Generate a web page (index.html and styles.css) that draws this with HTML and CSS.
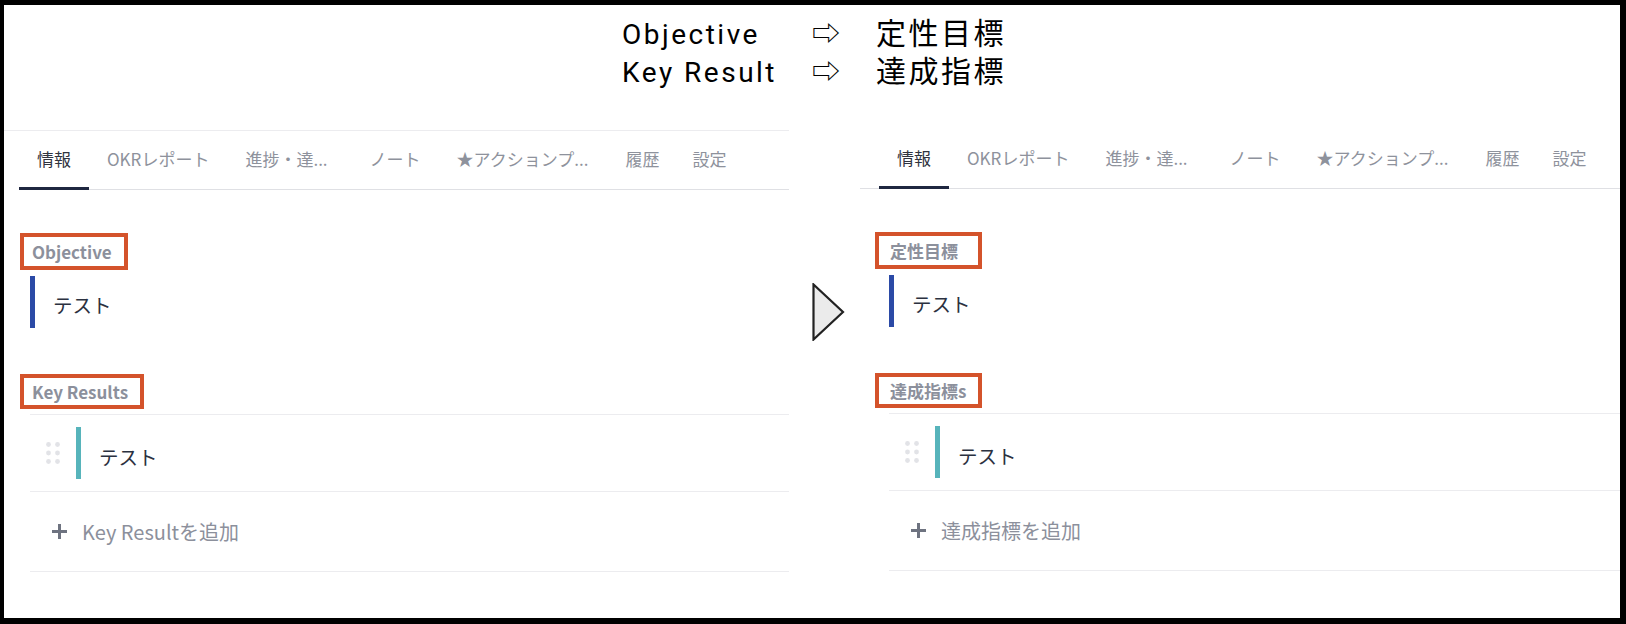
FILE: index.html
```html
<!DOCTYPE html>
<html lang="ja">
<head>
    <meta charset="UTF-8">
    <meta name="viewport" content="width=device-width, initial-scale=1.0">
    <title>OKR 用語の変更</title>
    <link rel="stylesheet" href="styles.css">
</head>
<body>
<div class="frame">
    <header class="legend">
        <div class="legend-grid">
            <span class="term">Objective</span><span class="arrow">⇨</span><span class="ja">定性目標</span>
            <span class="term">Key Result</span><span class="arrow">⇨</span><span class="ja">達成指標</span>
        </div>
    </header>

    <main class="compare">
        <!-- 変更前 -->
        <section class="panel panel-before">
            <nav class="tabs">
                <span class="tab active">情報</span>
                <span class="tab">OKRレポート</span>
                <span class="tab trunc">進捗・達...</span>
                <span class="tab">ノート</span>
                <span class="tab trunc-last">★アクションプ...</span>
                <span class="tab short">履歴</span>
                <span class="tab">設定</span>
            </nav>
            <div class="info">
                <div class="field">
                    <span class="field-label">Objective</span>
                    <div class="objective-item">テスト</div>
                </div>
                <div class="field field-kr">
                    <span class="field-label">Key Results</span>
                    <div class="kr-list">
                        <div class="kr-row">
                            <svg class="drag" width="15" height="22" viewBox="0 0 15 22">
                                <circle cx="2.5" cy="2.5" r="2.4"/><circle cx="11.5" cy="2.5" r="2.4"/>
                                <circle cx="2.5" cy="11" r="2.4"/><circle cx="11.5" cy="11" r="2.4"/>
                                <circle cx="2.5" cy="19.5" r="2.4"/><circle cx="11.5" cy="19.5" r="2.4"/>
                            </svg>
                            <span class="kr-bar"></span>
                            <span class="kr-text">テスト</span>
                        </div>
                        <div class="add-row">
                            <svg class="plus" width="17" height="17" viewBox="0 0 17 17"><path d="M8.5 1v15M1 8.5h15"/></svg>
                            <span>Key Resultを追加</span>
                        </div>
                    </div>
                </div>
            </div>
        </section>

        <div class="pointer">
            <svg width="33" height="58" viewBox="0 0 33 58"><polygon points="1.5,1.5 1.5,56.5 31,29"/></svg>
        </div>

        <!-- 変更後 -->
        <section class="panel panel-after">
            <nav class="tabs">
                <span class="tab active">情報</span>
                <span class="tab">OKRレポート</span>
                <span class="tab trunc">進捗・達...</span>
                <span class="tab">ノート</span>
                <span class="tab trunc-last">★アクションプ...</span>
                <span class="tab short">履歴</span>
                <span class="tab">設定</span>
            </nav>
            <div class="info">
                <div class="field">
                    <span class="field-label">定性目標</span>
                    <div class="objective-item">テスト</div>
                </div>
                <div class="field field-kr">
                    <span class="field-label">達成指標s</span>
                    <div class="kr-list">
                        <div class="kr-row">
                            <svg class="drag" width="15" height="22" viewBox="0 0 15 22">
                                <circle cx="2.5" cy="2.5" r="2.4"/><circle cx="11.5" cy="2.5" r="2.4"/>
                                <circle cx="2.5" cy="11" r="2.4"/><circle cx="11.5" cy="11" r="2.4"/>
                                <circle cx="2.5" cy="19.5" r="2.4"/><circle cx="11.5" cy="19.5" r="2.4"/>
                            </svg>
                            <span class="kr-bar"></span>
                            <span class="kr-text">テスト</span>
                        </div>
                        <div class="add-row">
                            <svg class="plus" width="17" height="17" viewBox="0 0 17 17"><path d="M8.5 1v15M1 8.5h15"/></svg>
                            <span>達成指標を追加</span>
                        </div>
                    </div>
                </div>
            </div>
        </section>
    </main>
</div>
</body>
</html>
```

FILE: styles.css
```css
body {
    margin: 0;
    font-family: "Noto Sans CJK JP", "Noto Sans", sans-serif;
    background: #fff;
}
.frame {
    width: 1626px;
    height: 624px;
    box-sizing: border-box;
    border: solid #000;
    border-width: 5px 6px 6px 4px;
    background: #fff;
    overflow: hidden;
}

/* 上部の用語対応 */
.legend {
    height: 125px;
    box-sizing: border-box;
    padding: 9px 0 0 618px;
}
.legend-grid {
    display: grid;
    grid-template-columns: 190px 64px auto;
    align-items: baseline;
    line-height: 34px;
    color: #000;
}
.term {
    font-family: Roboto, "Noto Sans CJK JP", sans-serif;
    font-size: 28px;
    letter-spacing: 2.5px;
}
.arrow {
    font-size: 28px;
}
.ja {
    font-size: 30px;
    letter-spacing: 2.5px;
}

/* 比較エリア */
.compare {
    display: flex;
    height: 489px;
}
.panel-before {
    width: 785px;
    border-top: 1px solid #ececef;
}
.panel-after {
    flex: 1;
}
.pointer {
    width: 71px;
    box-sizing: border-box;
    padding: 153px 0 0 23px;
}
.pointer polygon {
    fill: #ebebeb;
    stroke: #222;
    stroke-width: 2.2;
    stroke-linejoin: miter;
}

/* タブ */
.tabs {
    display: flex;
    height: 58px;
    border-bottom: 1px solid #dfe0e4;
}
.panel-before .tabs {
    margin-left: 15px;
}
.panel-after .tabs {
    padding-left: 19px;
}
.tab {
    height: 56px;
    line-height: 56px;
    padding: 0 18px;
    border-bottom: 3px solid transparent;
    font-size: 17px;
    color: #8e929c;
    white-space: nowrap;
}
.tab.trunc {
    padding-right: 24px;
}
.tab.trunc-last {
    padding-right: 19px;
}
.tab.short {
    padding-right: 15px;
}
.tab.active {
    color: #30343f;
    border-bottom-color: #1f2740;
}

/* 情報タブの中身 */
.info {
    padding-top: 43px;
}
.panel-before .info {
    padding-left: 26px;
}
.panel-after .info {
    padding-left: 29px;
}
.field {
    display: flex;
    flex-direction: column;
    align-items: flex-start;
}
.field-kr {
    margin-top: 46px;
}
.field-label {
    border: 4px solid #d4532b;
    padding: 2px 12px 2px 8px;
    margin-left: -10px;
    font-size: 17px;
    font-weight: 700;
    line-height: 25px;
    color: #8c909c;
}
.field-kr .field-label {
    padding-top: 1px;
    padding-bottom: 1px;
}
.panel-after .field-label {
    margin-left: -14px;
    padding-left: 11px;
    min-width: 76px;
}
.objective-item {
    align-self: stretch;
    margin-top: 6px;
    height: 52px;
    box-sizing: border-box;
    padding: 5px 0 0 18px;
    border-left: 5px solid #2b4aa6;
    display: flex;
    align-items: center;
    font-size: 19.5px;
    color: #2b3140;
}
.kr-list {
    align-self: stretch;
    margin-top: 5px;
    border-top: 1px solid #ececef;
}
.kr-row {
    display: flex;
    align-items: center;
    height: 76px;
    padding-left: 16px;
    border-bottom: 1px solid #ececef;
}
.drag {
    fill: #e2e3e7;
    margin-right: 15px;
}
.kr-bar {
    width: 5px;
    height: 52px;
    background: #57b4bb;
    margin-right: 18px;
}
.kr-text {
    font-size: 19.5px;
    color: #2b3140;
    padding-top: 6px;
}
.add-row {
    display: flex;
    align-items: center;
    height: 79px;
    padding-left: 21px;
    border-bottom: 1px solid #ececef;
    font-size: 20px;
    color: #8c909c;
}
.plus {
    margin-right: 14px;
}
.plus path {
    stroke: #6e7380;
    stroke-width: 3;
}
```
